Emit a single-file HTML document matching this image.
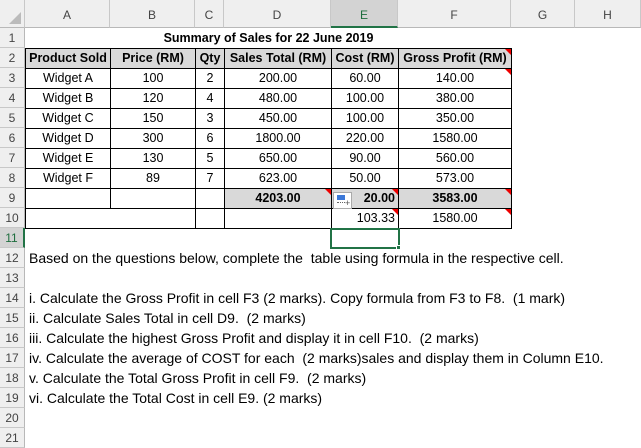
<!DOCTYPE html>
<html><head><style>
*{margin:0;padding:0;box-sizing:border-box}
body{width:641px;height:446px;overflow:hidden;background:#fff;font-family:"Liberation Sans",sans-serif;font-size:12.5px;color:#000;position:relative}
.ch{position:absolute;top:0;height:28px;background:#efefef;border-right:1px solid #c8c8c8;border-bottom:1px solid #b8b8b8;color:#444;text-align:center;line-height:30px;font-size:12px}
.rh{position:absolute;left:0;width:25px;height:20px;background:#efefef;border-bottom:1px solid #c8c8c8;border-right:1px solid #b8b8b8;color:#444;text-align:center;line-height:20px;font-size:12px}
table{position:absolute;left:25px;top:28px;border-collapse:collapse;table-layout:fixed}
td{height:20px;padding:0 3px;text-align:center;white-space:nowrap;overflow:visible;line-height:18px;position:relative}
.b td{border:1px solid #000}
.g{background:#d9d9d9}
.bold{font-weight:bold}
.tri::after{content:"";position:absolute;right:0;top:0;border-top:6px solid #e00;border-left:6px solid transparent}
.t{position:absolute;left:29px;white-space:nowrap;line-height:20px;font-size:14px}
</style></head><body>
<div class="ch" style="left:0;width:25px;background:#efefef"><div style="position:absolute;right:3px;bottom:3px;border-bottom:12px solid #bbb;border-left:12px solid transparent"></div></div>
<div class="ch" style="left:25px;width:85px">A</div>
<div class="ch" style="left:110px;width:85px">B</div>
<div class="ch" style="left:195px;width:29px">C</div>
<div class="ch" style="left:224px;width:107px">D</div>
<div class="ch" style="left:331px;width:67px;background:#d3d3d3;color:#1e6e3e;border-bottom:2px solid #217346">E</div>
<div class="ch" style="left:398px;width:113px">F</div>
<div class="ch" style="left:511px;width:64px">G</div>
<div class="ch" style="left:575px;width:66px">H</div>

<div class="rh" style="top:28px">1</div>
<div class="rh" style="top:48px">2</div>
<div class="rh" style="top:68px">3</div>
<div class="rh" style="top:88px">4</div>
<div class="rh" style="top:108px">5</div>
<div class="rh" style="top:128px">6</div>
<div class="rh" style="top:148px">7</div>
<div class="rh" style="top:168px">8</div>
<div class="rh" style="top:188px">9</div>
<div class="rh" style="top:208px">10</div>
<div class="rh" style="top:228px;background:#d3d3d3;color:#1e6e3e;border-right:2px solid #217346">11</div>
<div class="rh" style="top:248px">12</div>
<div class="rh" style="top:268px">13</div>
<div class="rh" style="top:288px">14</div>
<div class="rh" style="top:308px">15</div>
<div class="rh" style="top:328px">16</div>
<div class="rh" style="top:348px">17</div>
<div class="rh" style="top:368px">18</div>
<div class="rh" style="top:388px">19</div>
<div class="rh" style="top:408px">20</div>
<div class="rh" style="top:428px">21</div>

<table>
<colgroup><col style="width:85px"><col style="width:85px"><col style="width:29px"><col style="width:107px"><col style="width:67px"><col style="width:113px"></colgroup>
<tr><td colspan="6" class="bold">Summary of Sales for 22 June 2019</td></tr>
<tr class="b bold g"><td>Product Sold</td><td>Price (RM)</td><td style="padding:0">Qty</td><td style="padding:0">Sales Total (RM)</td><td style="padding:0">Cost (RM)</td><td style="padding:0" class="tri">Gross Profit (RM)</td></tr>
<tr class="b"><td>Widget A</td><td>100</td><td>2</td><td>200.00</td><td>60.00</td><td class="tri">140.00</td></tr>
<tr class="b"><td>Widget B</td><td>120</td><td>4</td><td>480.00</td><td>100.00</td><td>380.00</td></tr>
<tr class="b"><td>Widget C</td><td>150</td><td>3</td><td>450.00</td><td>100.00</td><td>350.00</td></tr>
<tr class="b"><td>Widget D</td><td>300</td><td>6</td><td>1800.00</td><td>220.00</td><td>1580.00</td></tr>
<tr class="b"><td>Widget E</td><td>130</td><td>5</td><td>650.00</td><td>90.00</td><td>560.00</td></tr>
<tr class="b"><td>Widget F</td><td>89</td><td>7</td><td>623.00</td><td>50.00</td><td>573.00</td></tr>
<tr class="b"><td></td><td></td><td></td><td class="g bold tri">4203.00</td><td class="g bold tri" style="text-align:right">20.00</td><td class="g bold tri">3583.00</td></tr>
<tr class="b"><td colspan="2"></td><td></td><td></td><td class="tri" style="text-align:right">103.33</td><td class="tri">1580.00</td></tr>
</table>

<div style="position:absolute;left:333px;top:192px;width:19px;height:17px;background:#fff;border:1px solid #aaa">
<div style="position:absolute;left:3px;top:2px;width:8px;height:5px;background:#3c78d8"></div>
<div style="position:absolute;left:3px;top:9px;width:8px;border-top:1px dotted #666"></div>
<div style="position:absolute;left:11px;top:6px;font-size:9px;color:#555;line-height:9px">+</div>
</div>

<div style="position:absolute;left:330px;top:228px;width:70px;height:21px;border:2px solid #217346"></div>
<div style="position:absolute;left:396px;top:245px;width:5px;height:5px;background:#217346;border:1px solid #fff"></div>

<div class="t" style="top:248px">Based on the questions below, complete the&nbsp; table using formula in the respective cell.</div>
<div class="t" style="top:288px">i. Calculate the Gross Profit in cell F3 (2 marks). Copy formula from F3 to F8.&nbsp; (1 mark)</div>
<div class="t" style="top:308px">ii. Calculate Sales Total in cell D9.&nbsp; (2 marks)</div>
<div class="t" style="top:328px">iii. Calculate the highest Gross Profit and display it in cell F10.&nbsp; (2 marks)</div>
<div class="t" style="top:348px">iv. Calculate the average of COST for each&nbsp; (2 marks)sales and display them in Column E10.</div>
<div class="t" style="top:368px">v. Calculate the Total Gross Profit in cell F9.&nbsp; (2 marks)</div>
<div class="t" style="top:388px">vi. Calculate the Total Cost in cell E9. (2 marks)</div>
</body></html>
